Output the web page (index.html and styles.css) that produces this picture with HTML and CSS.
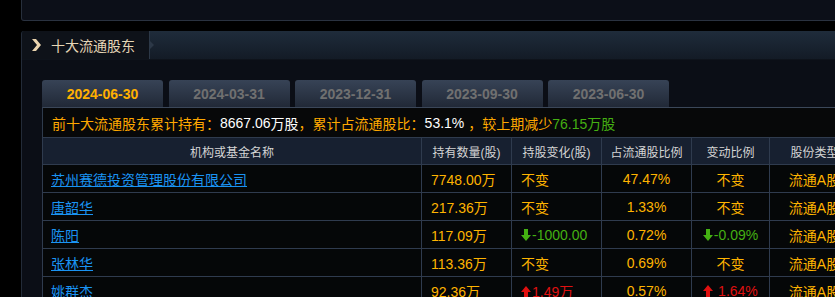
FILE: index.html
```html
<!DOCTYPE html>
<html lang="zh-CN">
<head>
<meta charset="utf-8">
<title>十大流通股东</title>
<link rel="stylesheet" href="styles.css">
</head>
<body>
<div class="top-panel"></div>
<section class="panel">
  <header class="panel-head">
    <div class="title">
      <svg class="chev" width="10" height="12" viewBox="0 0 10 12"><path d="M1 0 L5 0 L10 6 L5 12 L1 12 L6 6 Z" fill="#e9d3ad"/></svg>
      <span>十大流通股东</span>
    </div>
  </header>
  <div class="panel-body">
    <nav class="tabs">
      <div class="tab active">2024-06-30</div>
      <div class="tab">2024-03-31</div>
      <div class="tab">2023-12-31</div>
      <div class="tab">2023-09-30</div>
      <div class="tab">2023-06-30</div>
    </nav>
    <div class="summary">前十大流通股东累计持有：<b class="w">8667.06</b><span class="w2">万股</span>，累计占流通股比：<b class="w">53.1%</b>&nbsp;，较上期减少<span class="g">76.15万股</span></div>
    <table class="grid">
      <colgroup>
        <col class="c-name"><col class="c-90"><col class="c-90"><col class="c-90"><col class="c-78"><col class="c-type">
      </colgroup>
      <thead>
        <tr><th>机构或基金名称</th><th>持有数量(股)</th><th>持股变化(股)</th><th>占流通股比例</th><th>变动比例</th><th>股份类型</th></tr>
      </thead>
      <tbody>
        <tr><td class="name"><a href="#">苏州赛德投资管理股份有限公司</a></td><td class="l">7748.00万</td><td class="l">不变</td><td>47.47%</td><td>不变</td><td>流通A股</td></tr>
        <tr><td class="name"><a href="#">唐韶华</a></td><td class="l">217.36万</td><td class="l">不变</td><td>1.33%</td><td>不变</td><td>流通A股</td></tr>
        <tr><td class="name"><a href="#">陈阳</a></td><td class="l">117.09万</td><td class="l g"><svg class="arr" width="10" height="12" viewBox="0 0 10 12"><path d="M3 0 H7 V6 H10 L5 12 L0 6 H3 Z" fill="#44b012"/></svg>-1000.00</td><td>0.72%</td><td class="g"><svg class="arr" width="10" height="12" viewBox="0 0 10 12"><path d="M3 0 H7 V6 H10 L5 12 L0 6 H3 Z" fill="#44b012"/></svg>-0.09%</td><td>流通A股</td></tr>
        <tr><td class="name"><a href="#">张林华</a></td><td class="l">113.36万</td><td class="l">不变</td><td>0.69%</td><td>不变</td><td>流通A股</td></tr>
        <tr><td class="name"><a href="#">姚群杰</a></td><td class="l">92.36万</td><td class="l r"><svg class="arr" width="10" height="12" viewBox="0 0 10 12"><path d="M5 0 L10 6 H7 V12 H3 V6 H0 Z" fill="#e01010"/></svg>1.49万</td><td>0.57%</td><td class="r"><svg class="arr" width="10" height="12" viewBox="0 0 10 12"><path d="M5 0 L10 6 H7 V12 H3 V6 H0 Z" fill="#e01010"/></svg> 1.64%</td><td>流通A股</td></tr>
      </tbody>
    </table>
  </div>
</section>
</body>
</html>
```

FILE: styles.css
```css
html, body {
  margin: 0;
  padding: 0;
  background: #000;
  overflow: hidden;
  height: 297px;
}
body {
  font-family: "Liberation Sans", "Noto Sans CJK SC", sans-serif;
  font-size: 14px;
  color: #ffb400;
}
.top-panel {
  margin-left: 21px;
  height: 20px;
  background: #0c0f18;
  border-left: 1px solid #272f3c;
  border-bottom: 1px solid #2a3240;
  border-bottom-left-radius: 3px;
}
.panel {
  margin-top: 10px;
  margin-left: 21px;
  height: 280px;
  background: #0b0e16;
  border-left: 1px solid #232b38;
  border-top-left-radius: 3px;
  overflow: hidden;
}
.panel-head {
  height: 28px;
  background: linear-gradient(#1f2c3b, #131b26);
  border-bottom: 1px solid #0e131b;
  display: flex;
}
.title {
  position: relative;
  width: 128px;
  background: #0e1219;
  border-right: 1px solid #2c3847;
  display: flex;
  align-items: center;
  padding-left: 9px;
  box-sizing: border-box;
  color: #e6d6b6;
  font-size: 14px;
}
.title::after {
  content: "";
  position: absolute;
  right: -5px;
  top: 10px;
  border-top: 4px solid transparent;
  border-bottom: 4px solid transparent;
  border-left: 4px solid #2c3847;
}
.chev { margin-right: 10px; }
.panel-body {
  padding: 20px 0 0 20px;
}
.tabs {
  display: flex;
  gap: 5.5px;
  height: 27px;
}
.tab {
  width: 121px;
  height: 27px;
  border-radius: 3px 3px 0 0;
  background: linear-gradient(#374356, #212937);
  color: #707070;
  font-weight: bold;
  font-size: 14px;
  display: flex;
  align-items: center;
  justify-content: center;
}
.tab.active { color: #ffb000; }
.summary {
  height: 30px;
  box-sizing: border-box;
  border-top: 1px solid #3b4759;
  border-left: 1px solid #2f3b4c;
  background: #070809;
  padding-left: 9px;
  display: flex;
  align-items: center;
  color: #ffa800;
  white-space: nowrap;
}
.summary .w { color: #fff; font-weight: normal; }
.summary .w2 { color: #fff; }
.g { color: #44b012; }
.r { color: #e01010; }
.grid {
  border-collapse: collapse;
  table-layout: fixed;
  width: 817px;
  min-width: 817px;
  border-left: 1px solid #2f3b4e;
}
.c-name { width: 379px; }
.c-90 { width: 90px; }
.c-78 { width: 78px; }
.c-type { width: 90px; }
.grid th {
  height: 26px;
  background: #172030;
  color: #d4d4d4;
  font-weight: normal;
  font-size: 12px;
  border: 1px solid #2f3b4e;
  padding: 0;
}
.grid td {
  height: 27px;
  background: #050708;
  border: 1px solid #2f3b4e;
  text-align: center;
  padding: 0;
  white-space: nowrap;
}
.grid td.l { text-align: left; padding-left: 9px; }
.grid td.name { text-align: left; padding-left: 8px; }
.grid a { color: #1a93f2; text-decoration: underline; }
.arr { vertical-align: -1px; margin-right: 1px; }
```
